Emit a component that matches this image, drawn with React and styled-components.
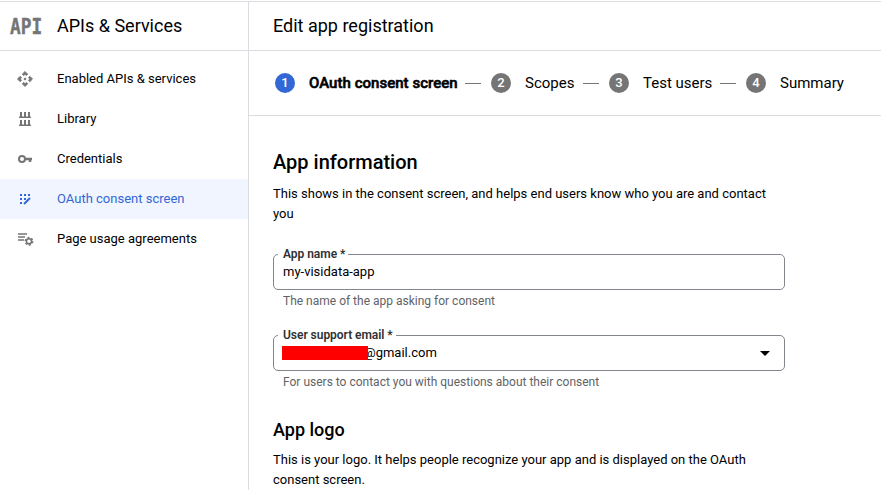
import React from "react";
import styled, { createGlobalStyle } from "styled-components";

const GlobalStyle = createGlobalStyle`
  * { box-sizing: border-box; }
  body { margin: 0; background: #fff; color: #000; font-family: Roboto, sans-serif; font-size: 13px; line-height: 20px; }
  h1, h2, h3, p { margin: 0; font-weight: 400; }
`;
const Page = styled.div`
  display: flex;
  width: 881px;
  height: 490px;
  overflow: hidden;
  padding-top: 1px;
`;
const Sidebar = styled.aside`
  width: 249px;
  flex: none;
  border-top: 1px solid #dadce0;
  border-right: 1px solid #dadce0;
`;
const Header = styled.header`
  display: flex;
  align-items: center;
  height: 49px;
  border-bottom: 1px solid #dadce0;
  padding-left: ${(p) => p.$indent}px;
`;
const Title = styled.h1`
  font-size: 18px;
  line-height: 24px;
`;
const ApiMark = styled.div`
  width: 47px;
  height: 24px;
  flex: none;
  padding-top: 1px;
  font: 700 22px/24px "DejaVu Sans Mono", monospace;
  color: #757575;
  -webkit-text-stroke: 0.4px #757575;
  transform: scaleX(0.81);
  transform-origin: left;
`;
const Nav = styled.nav`
  padding-top: 8px;
`;
const NavItem = styled.div`
  display: flex;
  align-items: center;
  gap: 23px;
  height: 40px;
  padding-left: 16px;
  color: ${(p) => (p.$active ? "#3367d6" : "#000")};
  background: ${(p) => (p.$active ? "#f0f5ff" : "transparent")};
  svg { width: 18px; height: 18px; flex: none; color: ${(p) => (p.$active ? "#3367d6" : "#757575")}; }
`;
const Main = styled.main`
  flex: 1;
  min-width: 0;
  border-top: 1px solid #dadce0;
`;
const Stepper = styled.div`
  display: flex;
  align-items: center;
  height: 65px;
  padding-left: 26px;
  border-bottom: 1px solid #dadce0;
`;
const Step = styled.div`
  display: flex;
  align-items: center;
  gap: 14px;
  font-size: 15px;
  width: ${(p) => p.$width}px;
  flex: none;
  white-space: nowrap;
`;
const StepName = styled.span`
  font-weight: ${(p) => (p.$active ? 500 : 400)};
  letter-spacing: ${(p) => (p.$active ? "0.03px" : "normal")};
  -webkit-text-stroke: ${(p) => (p.$active ? "0.55px #000" : "0")};
`;
const StepNumber = styled.span`
  width: 20px;
  height: 20px;
  flex: none;
  border-radius: 50%;
  background: ${(p) => (p.$active ? "#3367d6" : "#757575")};
  color: #fff;
  font-size: 13px;
  font-weight: 500;
  text-align: center;
`;
const Connector = styled.span`
  width: 16px;
  height: 1px;
  margin: 0 10px 0 8px;
  background: #757575;
`;
const Content = styled.section`
  padding: 34px 0 0 24px;
`;
const Heading = styled.h2`
  font-size: 20px;
  line-height: 24px;
  font-weight: 500;
`;
const SubHeading = styled.h3`
  font-size: 18px;
  line-height: 24px;
  font-weight: 500;
  margin-top: 26px;
`;
const Paragraph = styled.p`
  width: 512px;
  margin-top: ${(p) => p.$top}px;
`;
const Field = styled.div`
  position: relative;
  display: flex;
  align-items: center;
  justify-content: space-between;
  width: 512px;
  height: 36px;
  margin-top: ${(p) => p.$top}px;
  padding: 0 14px 0 9px;
  border: 1px solid #80868b;
  border-radius: 5px;
`;
const Label = styled.label`
  position: absolute;
  top: -10px;
  left: 4px;
  padding: 0 3px 0 5px;
  background: #fff;
  color: #303134;
  font-size: 12px;
  line-height: 18px;
  font-weight: 600;
  letter-spacing: -0.04px;
`;
const Value = styled.span`
  display: flex;
  align-items: center;
`;
const Redaction = styled.span`
  width: 86px;
  height: 14px;
  margin: 0 -4px 0 -1px;
  background: #f00;
  z-index: 1;
`;
const Caret = styled.svg`
  width: 10px;
  height: 5px;
`;
const Hint = styled.p`
  padding-left: 10px;
  margin-top: 1px;
  font-size: 12px;
  color: #5f6368;
`;

const ApiIcon = () => (
  <svg viewBox="0 0 18 18" fill="currentColor" stroke="currentColor" strokeWidth="0.9" strokeLinejoin="round">
    {[0, 90, 180, 270].map((angle) => (
      <path key={angle} transform={`rotate(${angle} 9 9)`} d="M9 1.500 11.700 4.200 10.400 5.500 9 4.300 7.600 5.500 6.300 4.200z" />
    ))}
    <circle cx="9" cy="9" r="0.9" />
  </svg>
);
const LibraryIcon = () => (
  <svg viewBox="0 0 18 18" fill="currentColor">
    <path d="M3 6.500h12V8H3zM3 14.500h12V16H3zM4 2h2v5H4zM8 2h2v5H8zM12 2h2v5h-2zM4 10h2v5H4zM8 10h2v5H8zM12 10h2v5h-2z" />
  </svg>
);
const KeyIcon = () => (
  <svg viewBox="0 0 18 18" fill="none" stroke="currentColor" strokeWidth="2">
    <circle cx="6" cy="9" r="3" />
    <path d="M9 9h7M14 9v3" strokeWidth="2.5" />
  </svg>
);
const ConsentIcon = () => (
  <svg viewBox="0 0 18 18" fill="currentColor">
    <path d="M4 4h2v2H4zM8 4h2v2H8zM12 4h2v2h-2zM4 8h2v2H4zM8 8h2v2H8zM4 12h2v2H4z" />
    <path d="m8 14 6-6" stroke="currentColor" strokeWidth="2" />
  </svg>
);
const AgreementIcon = () => (
  <svg viewBox="0 0 18 18" fill="none" stroke="currentColor">
    <path d="M2 4h9M2 7h7M2 10h6" strokeWidth="1.5" />
    <circle cx="13" cy="11.3" r="2.6" strokeWidth="1.6" />
    <circle cx="13" cy="11.3" r="3.800" strokeWidth="1.300" strokeDasharray="2 1.979" />
  </svg>
);

const items = [
  ["Enabled APIs & services", ApiIcon],
  ["Library", LibraryIcon],
  ["Credentials", KeyIcon],
  ["OAuth consent screen", ConsentIcon],
  ["Page usage agreements", AgreementIcon],
];
const steps = [
  ["OAuth consent screen", 182],
  ["Scopes", 84],
  ["Test users", 103],
  ["Summary", 98],
];

export default function App() {
  return (
    <Page>
      <GlobalStyle />
      <Sidebar>
        <Header $indent={10}>
          <ApiMark>API</ApiMark>
          <Title>APIs &amp; Services</Title>
        </Header>
        <Nav>
          {items.map(([name, Icon], i) => (
            <NavItem key={name} $active={i === 3}>
              <Icon />
              {name}
            </NavItem>
          ))}
        </Nav>
      </Sidebar>
      <Main>
        <Header $indent={24}>
          <Title>Edit app registration</Title>
        </Header>
        <Stepper>
          {steps.map(([name, width], i) => (
            <React.Fragment key={name}>
              {i > 0 && <Connector />}
              <Step $width={width}>
                <StepNumber $active={i === 0}>{i + 1}</StepNumber>
                <StepName $active={i === 0}>{name}</StepName>
              </Step>
            </React.Fragment>
          ))}
        </Stepper>
        <Content>
          <Heading>App information</Heading>
          <Paragraph $top={10}>
            This shows in the consent screen, and helps end users know who you are and contact you
          </Paragraph>
          <Field $top={30}>
            <Label>App name *</Label>
            <Value>my-visidata-app</Value>
          </Field>
          <Hint>The name of the app asking for consent</Hint>
          <Field $top={24}>
            <Label>User support email *</Label>
            <Value>
              <Redaction />
              @gmail.com
            </Value>
            <Caret viewBox="0 0 10 5">
              <path d="M0 0h10L5 5z" />
            </Caret>
          </Field>
          <Hint>For users to contact you with questions about their consent</Hint>
          <SubHeading>App logo</SubHeading>
          <Paragraph $top={8}>
            This is your logo. It helps people recognize your app and is displayed on the OAuth consent screen.
          </Paragraph>
        </Content>
      </Main>
    </Page>
  );
}
